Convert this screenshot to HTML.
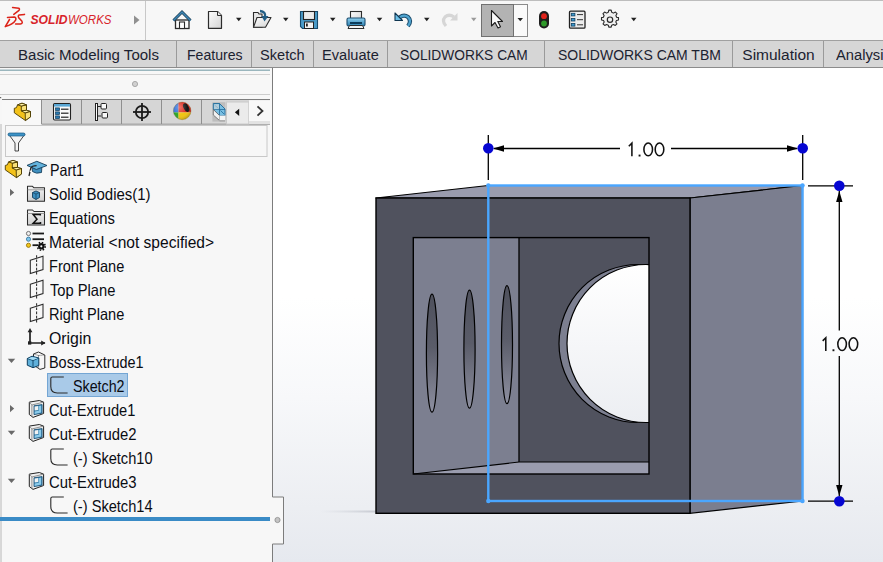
<!DOCTYPE html>
<html><head><meta charset="utf-8">
<style>
*{margin:0;padding:0;box-sizing:border-box}
html,body{width:883px;height:562px;overflow:hidden;background:#f7f7f7;font-family:"Liberation Sans",sans-serif}
.abs{position:absolute}
#top{left:0;top:0;width:883px;height:40px;background:#f7f7f7;border-top:1px solid #bdbdbd}
#tabs{left:0;top:40px;width:883px;height:28px;background:#d6d6d6;border-top:1px solid #a0a0a0;border-bottom:1px solid #8c8c8c}
.tab{position:absolute;top:0;height:26px;border-right:1px solid #9a9a9a;font-size:15.5px;color:#1c2230;line-height:27.7px;white-space:nowrap}
.tl{position:absolute;transform-origin:0 0;font-size:16.5px;color:#0a0c12;white-space:nowrap;line-height:18px}
#view{left:273px;top:68px;width:610px;height:494px;background:linear-gradient(#ffffff 0px,#ffffff 230px,#f7f8fa 330px,#eceef2 440px,#e6e9ef 494px)}
</style></head><body>
<div id="top" class="abs"></div>
<svg class="abs" style="left:0;top:0" width="660" height="40" viewBox="0 0 660 40">
<defs>
 <linearGradient id="pg" x1="0" y1="0" x2="1" y2="1"><stop offset="0" stop-color="#fdfdfd"/><stop offset="1" stop-color="#d4d4d4"/></linearGradient>
 <linearGradient id="bl" x1="0" y1="0" x2="0" y2="1"><stop offset="0" stop-color="#8fd0ef"/><stop offset="1" stop-color="#2a7fb0"/></linearGradient>
</defs>
<!-- logo mark -->
<g fill="none" stroke="#dc2319" stroke-width="1.55" stroke-linecap="round" stroke-linejoin="round">
 <path d="M12.6,7.6 L18.8,8.2 Q20,8.9 19,10.4 L13.8,14.4"/>
 <path d="M7.5,17.4 L14.3,17.1 Q16.6,17.6 15.6,20.2 Q13,24.6 5.3,26.6 L9.5,19.5"/>
 <path d="M24.5,14.4 L19.2,14.9 Q17.6,15.8 18.8,17.9 L21.8,21 Q23.2,23.6 20.4,23.9 L15.6,23.9"/>
</g>
<text x="30.5" y="24.4" font-family="Liberation Sans" font-weight="bold" font-style="italic" font-size="12.6" fill="#d8232a" textLength="37" lengthAdjust="spacingAndGlyphs">SOLID</text>
<text x="68" y="24.4" font-family="Liberation Sans" font-style="italic" font-size="12.6" fill="#d8232a" textLength="43.5" lengthAdjust="spacingAndGlyphs">WORKS</text>
<polygon points="134,15.5 139.5,20 134,24.5" fill="#909090"/>
<line x1="145.5" y1="1" x2="145.5" y2="40" stroke="#c8c8c8" stroke-width="1"/>
<!-- home -->
<rect x="175.5" y="20" width="13.5" height="8.5" fill="#fafafa" stroke="#2a2a2a" stroke-width="1.3"/>
<rect x="179.5" y="22" width="5" height="6.5" fill="#fff" stroke="#2a2a2a" stroke-width="1.1"/>
<path d="M173.5,20.5 L182,12 L190.5,20.5" fill="none" stroke="#1c3f57" stroke-width="3"/>
<path d="M173.5,20.5 L182,12 L190.5,20.5" fill="none" stroke="#3d85b3" stroke-width="1.5"/>
<!-- page -->
<path d="M208.5,11.5 L217.5,11.5 L221.5,15.5 L221.5,28.3 L208.5,28.3 Z" fill="url(#pg)" stroke="#2c2c2c" stroke-width="1.2" stroke-linejoin="round"/>
<path d="M217.5,11.5 L217.5,15.5 L221.5,15.5" fill="#e8e8e8" stroke="#2c2c2c" stroke-width="1"/>
<polygon points="236,17.8 241.5,17.8 238.75,21.2" fill="#222"/>
<!-- folder -->
<path d="M253.5,12.5 L258,12.5 L259,14 L262,14 L262,27.2 L253.5,27.2 Z" fill="#e8e8e8" stroke="#2c2c2c" stroke-width="1.1"/>
<path d="M257,17.5 L271,17.5 L265.5,27.2 L253.5,27.2 Z" fill="url(#pg)" stroke="#2c2c2c" stroke-width="1.1" stroke-linejoin="round"/>
<path d="M260,11 Q266,11.5 265,17" fill="none" stroke="#245f86" stroke-width="2.4"/>
<polygon points="261.5,16 268.5,16 264.5,21.5" fill="#245f86"/>
<polygon points="283,17.8 288.5,17.8 285.75,21.2" fill="#222"/>
<!-- save -->
<path d="M300.5,11.5 L317.5,11.5 L317.5,28.5 L302.5,28.5 L300.5,26.5 Z" fill="#4b9bc8" stroke="#184a6b" stroke-width="1.1"/>
<rect x="303.5" y="11.5" width="11" height="8" fill="#ececec" stroke="#222" stroke-width="1.1"/>
<rect x="304.5" y="22" width="9" height="6.5" fill="#f2f2f2" stroke="#222" stroke-width="1"/>
<rect x="306" y="23.5" width="1.8" height="3" fill="#222"/>
<polygon points="330,17.8 335.5,17.8 332.75,21.2" fill="#222"/>
<!-- print -->
<rect x="350.5" y="11.5" width="11" height="8.5" fill="url(#pg)" stroke="#2c2c2c" stroke-width="1.1"/>
<rect x="347" y="18" width="18" height="8" rx="1.5" fill="url(#bl)" stroke="#1d4e70" stroke-width="1.1"/>
<rect x="350" y="22" width="12" height="2" fill="#0d3d5c"/>
<path d="M349.5,25.5 L362.5,25.5 L364,28.5 L348,28.5 Z" fill="#f4f4f4" stroke="#2c2c2c" stroke-width="1"/>
<polygon points="376.8,17.8 382.3,17.8 379.55,21.2" fill="#222"/>
<!-- undo -->
<path d="M399.5,17.5 Q404,14 408,17 Q412,21 408,26" fill="none" stroke="#1c4c6c" stroke-width="4.2"/>
<path d="M399.5,17.5 Q404,14 408,17 Q412,21 408,26" fill="none" stroke="#4ea3cf" stroke-width="2.2"/>
<polygon points="395,13 395,20.5 402.5,20.5" fill="#6cc0e8" stroke="#0f3550" stroke-width="1.1" stroke-linejoin="round"/>
<polygon points="424,17.8 429.5,17.8 426.75,21.2" fill="#222"/>
<!-- redo -->
<path d="M454,17 Q449,13.5 445,17 Q441.5,21 446,26" fill="none" stroke="#d6d6d6" stroke-width="3.2"/>
<polygon points="457.5,13 457.5,20.5 450,20.5" fill="#d6d6d6"/>
<polygon points="471,17.8 476.5,17.8 473.75,21.2" fill="#9a9a9a"/>
<!-- select button -->
<rect x="481.5" y="4.5" width="46" height="32" fill="#fafafa" stroke="#8a8a8a" stroke-width="1"/>
<rect x="481.5" y="4.5" width="32" height="32" fill="#b3b3b3" stroke="#707070" stroke-width="1"/>
<path d="M491.5,10.5 L491.5,26 L495,22.5 L498,28 L500.5,26.8 L497.8,21.5 L502.5,21.5 Z" fill="#fafafa" stroke="#1c1c1c" stroke-width="1.1" stroke-linejoin="round"/>
<polygon points="517.5,18 523,18 520.25,21.3" fill="#222"/>
<!-- traffic light -->
<rect x="539" y="11" width="10" height="17.5" rx="5" fill="#1e1e1e"/>
<circle cx="544" cy="16.2" r="2.9" fill="#e0241c"/>
<circle cx="544" cy="23.5" r="2.9" fill="#2f9a2a"/>
<!-- list -->
<rect x="569.5" y="11.2" width="15.5" height="17" rx="1" fill="#ececec" stroke="#222" stroke-width="1.3"/>
<rect x="571.3" y="13.3" width="3.6" height="2.6" fill="#3c9ad0" stroke="#0f3e5e" stroke-width="0.8"/>
<rect x="571.3" y="18.4" width="3.6" height="2.6" fill="#3c9ad0" stroke="#0f3e5e" stroke-width="0.8"/>
<rect x="571.3" y="23.5" width="3.6" height="2.6" fill="#3c9ad0" stroke="#0f3e5e" stroke-width="0.8"/>
<g stroke="#333" stroke-width="1"><line x1="577" y1="14.6" x2="583" y2="14.6"/><line x1="577" y1="19.7" x2="583" y2="19.7"/><line x1="577" y1="24.8" x2="583" y2="24.8"/></g>
<!-- gear -->
<path d="M608.8,11.8 L611.2,11.8 L611.7,14 L613.4,14.9 L615.4,13.8 L617,15.5 L615.9,17.4 L616.6,19.2 L618.5,19.6 L618.5,22 L616.5,22.5 L615.8,24.2 L617,26.2 L615.3,27.8 L613.4,26.7 L611.7,27.5 L611.2,29.5 L608.8,29.5 L608.3,27.5 L606.6,26.7 L604.7,27.8 L603,26.2 L604.2,24.2 L603.5,22.5 L601.5,22 L601.5,19.6 L603.4,19.2 L604.1,17.4 L603,15.5 L604.6,13.8 L606.6,14.9 L608.3,14 Z" transform="translate(0,-1.2) scale(1,0.96)" fill="#f0f0f0" stroke="#2a2a2a" stroke-width="1.1" stroke-linejoin="round"/>
<circle cx="610" cy="19.7" r="2.7" fill="none" stroke="#2a2a2a" stroke-width="1.2"/>
<polygon points="631,17.8 636.5,17.8 633.75,21.2" fill="#222"/>
</svg>

<div id="tabs" class="abs">
 <div class="tab" style="left:0px;width:177px;"><span id="tab0" style="transform:scaleX(0.970);position:absolute;left:17.8px;transform-origin:0 0;display:inline-block">Basic Modeling Tools</span></div>
 <div class="tab" style="left:177px;width:75px;"><span id="tab1" style="transform:scaleX(0.909);position:absolute;left:9.5px;transform-origin:0 0;display:inline-block">Features</span></div>
 <div class="tab" style="left:252px;width:62px;"><span id="tab2" style="transform:scaleX(0.941);position:absolute;left:8.2px;transform-origin:0 0;display:inline-block">Sketch</span></div>
 <div class="tab" style="left:314px;width:74px;"><span id="tab3" style="transform:scaleX(0.941);position:absolute;left:8.4px;transform-origin:0 0;display:inline-block">Evaluate</span></div>
 <div class="tab" style="left:388px;width:157px;"><span id="tab4" style="transform:scaleX(0.888);position:absolute;left:12.1px;transform-origin:0 0;display:inline-block">SOLIDWORKS CAM</span></div>
 <div class="tab" style="left:545px;width:188px;"><span id="tab5" style="transform:scaleX(0.902);position:absolute;left:12.5px;transform-origin:0 0;display:inline-block">SOLIDWORKS CAM TBM</span></div>
 <div class="tab" style="left:733px;width:91px;"><span id="tab6" style="transform:scaleX(1.000);position:absolute;left:9.3px;transform-origin:0 0;display:inline-block">Simulation</span></div>
 <div class="tab" style="left:824px;width:80px;border-right:none"><span id="tab7" style="transform:scaleX(0.949);position:absolute;left:11.5px;transform-origin:0 0;display:inline-block">Analysis</span></div>
</div>
<div id="view" class="abs"></div>
<svg class="abs" style="left:0;top:0" width="883" height="562" viewBox="0 0 883 562">
<defs>
 <linearGradient id="slotg" x1="0" y1="0" x2="0" y2="1">
  <stop offset="0" stop-color="#4f515d"/><stop offset="0.45" stop-color="#5a5c69"/><stop offset="1" stop-color="#8d8fa0"/>
 </linearGradient>
 <linearGradient id="holeg" x1="0" y1="0" x2="0" y2="1">
  <stop offset="0" stop-color="#ffffff"/><stop offset="1" stop-color="#eceef2"/>
 </linearGradient>
 <clipPath id="holeclip"><rect x="519" y="237" width="130" height="226"/></clipPath>
</defs>
<defs><linearGradient id="shd" x1="0" y1="0" x2="1" y2="0"><stop offset="0" stop-color="#b8bcc6" stop-opacity="0"/><stop offset="1" stop-color="#a4a8b2" stop-opacity="0.5"/></linearGradient>
<linearGradient id="shd2" x1="0" y1="0" x2="1" y2="0"><stop offset="0" stop-color="#a4a8b2" stop-opacity="0.5"/><stop offset="1" stop-color="#b8bcc6" stop-opacity="0"/></linearGradient></defs>
<rect x="320" y="510.5" width="56" height="2" fill="url(#shd)"/>
<!-- top face -->
<polygon points="376,198 488,185.5 802.5,185.5 690,198" fill="#9a9cae" stroke="#000" stroke-width="1.2" stroke-linejoin="round"/>
<!-- side face -->
<polygon points="690,198 802.5,185.5 802.5,501 690,513.3" fill="#7b7e8f" stroke="#000" stroke-width="1.2"/>
<!-- front face -->
<rect x="376" y="198" width="314" height="315.3" fill="#50525e" stroke="#000" stroke-width="1.4"/>
<!-- opening: left wall -->
<rect x="413.3" y="237.6" width="105.7" height="236.4" fill="#7c7f90"/>
<!-- back wall -->
<rect x="519" y="237.6" width="130" height="224.4" fill="#50525e"/>
<!-- floor -->
<polygon points="413.3,474 519,462 649,462 649,474" fill="#9a9cae"/>
<!-- hole -->
<g clip-path="url(#holeclip)">
 <circle cx="638" cy="343.5" r="79" fill="#7c7f90" stroke="#000" stroke-width="1.2"/>
 <circle cx="646" cy="343.5" r="79" fill="url(#holeg)" stroke="#000" stroke-width="1.2"/>
</g>
<line x1="519" y1="237.6" x2="519" y2="462" stroke="#000" stroke-width="1.3"/>
<line x1="413.3" y1="474" x2="519" y2="462" stroke="#000" stroke-width="1.2"/>
<line x1="519" y1="462" x2="649" y2="462" stroke="#000" stroke-width="1.2"/>
<rect x="413.3" y="237.6" width="235.7" height="236.4" fill="none" stroke="#000" stroke-width="1.4"/>
<!-- slots -->
<ellipse cx="432" cy="353.2" rx="5.6" ry="59" fill="url(#slotg)" stroke="#000" stroke-width="1.2"/>
<ellipse cx="469.5" cy="349.2" rx="5.6" ry="59" fill="url(#slotg)" stroke="#000" stroke-width="1.2"/>
<ellipse cx="507" cy="344.7" rx="5.5" ry="59" fill="url(#slotg)" stroke="#000" stroke-width="1.2"/>
<!-- sketch rect -->
<rect x="488.3" y="185.5" width="314.2" height="315.5" fill="none" stroke="#4aa6ff" stroke-width="2.4"/>
<g fill="#4aa6ff"><circle cx="488.3" cy="185.5" r="2.2"/><circle cx="802.5" cy="185.5" r="2.2"/><circle cx="488.3" cy="501" r="2.2"/><circle cx="802.5" cy="501" r="2.2"/></g>
<!-- dimensions -->
<g stroke="#000" stroke-width="1.3" fill="none">
 <line x1="488.3" y1="135" x2="488.3" y2="180"/>
 <line x1="802.7" y1="135" x2="802.7" y2="180"/>
 <line x1="494" y1="148.5" x2="620" y2="148.5"/>
 <line x1="671" y1="148.5" x2="797" y2="148.5"/>
 <line x1="808" y1="185.8" x2="853" y2="185.8"/>
 <line x1="808" y1="501.2" x2="853" y2="501.2"/>
 <line x1="839.3" y1="191" x2="839.3" y2="330.5"/>
 <line x1="839.3" y1="356" x2="839.3" y2="496"/>
</g>
<g fill="#000">
 <polygon points="493,148.5 504,145.3 504,151.7"/>
 <polygon points="798,148.5 787,145.3 787,151.7"/>
 <polygon points="839.3,191 836.1,202 842.5,202"/>
 <polygon points="839.3,496 836.1,485 842.5,485"/>
</g>
<g fill="#0606d2">
 <circle cx="488.3" cy="148.3" r="5.3"/>
 <circle cx="802.7" cy="148.3" r="5.3"/>
 <circle cx="839.3" cy="185.8" r="5.3"/>
 <circle cx="839.3" cy="501.2" r="5.3"/>
</g>
<g transform="translate(0,0)" fill="none" stroke="#111" stroke-width="1.55">
 <path d="M628.8,146.2 L631.9,143.1 L631.9,156.3"/>
 <ellipse cx="648.2" cy="149.4" rx="4.3" ry="6.4"/>
 <ellipse cx="659.5" cy="149.4" rx="4.3" ry="6.4"/>
</g><rect x="638.6" y="154.6" width="1.9" height="1.9" fill="#111"/>
<g transform="translate(193.9,194.7)" fill="none" stroke="#111" stroke-width="1.55">
 <path d="M628.8,146.2 L631.9,143.1 L631.9,156.3"/>
 <ellipse cx="648.2" cy="149.4" rx="4.3" ry="6.4"/>
 <ellipse cx="659.5" cy="149.4" rx="4.3" ry="6.4"/>
</g><rect x="832.5" y="349.29999999999995" width="1.9" height="1.9" fill="#111"/>
</svg>

<div id="panel" class="abs" style="left:0;top:68px;width:273px;height:494px;background:#f7f7f7;">
</div>
<svg class="abs" style="left:0;top:0" width="290" height="562" viewBox="0 0 290 562">
<defs>
 <linearGradient id="yel" x1="0" y1="0" x2="1" y2="1"><stop offset="0" stop-color="#fff08a"/><stop offset="1" stop-color="#e8b820"/></linearGradient>
 <linearGradient id="fold" x1="0" y1="0" x2="0" y2="1"><stop offset="0" stop-color="#f4f4f4"/><stop offset="1" stop-color="#cfcfcf"/></linearGradient>
 <linearGradient id="cube" x1="0" y1="0" x2="1" y2="1"><stop offset="0" stop-color="#9fd6f2"/><stop offset="1" stop-color="#1f6e9e"/></linearGradient>
</defs>
<!-- panel right border -->
<path d="M272.5,68 L272.5,497 L283.5,497 L283.5,544 L272.5,544 L272.5,562" fill="#f7f7f7" stroke="#7c7c7c" stroke-width="1"/>
<rect x="0" y="498" width="272" height="45" fill="#f7f7f7"/>
<circle cx="277.5" cy="520" r="2.6" fill="#c4c4c4" stroke="#8c8c8c" stroke-width="0.8"/>
<!-- top lines -->
<line x1="0" y1="70.3" x2="270" y2="70.3" stroke="#9ab6bd" stroke-width="1.4"/>
<line x1="0" y1="74.5" x2="270" y2="74.5" stroke="#d2d2d2" stroke-width="1"/>
<circle cx="135" cy="84" r="2.6" fill="#d0d0d0" stroke="#9a9a9a" stroke-width="0.8"/>
<line x1="0" y1="94.5" x2="270" y2="94.5" stroke="#cdcdcd" stroke-width="1"/>
<rect x="0" y="97" width="1.2" height="1.2" fill="#666"/>
<!-- tab row -->
<rect x="2" y="99.5" width="268" height="24.5" fill="#d6d6d6"/>
<rect x="2" y="99.5" width="39.5" height="25.5" fill="#f8f8f8"/>
<line x1="2" y1="99.5" x2="270" y2="99.5" stroke="#7d7d7d" stroke-width="1.1"/>
<line x1="41.5" y1="124.2" x2="270" y2="124.2" stroke="#8f8f8f" stroke-width="1"/>
<g stroke="#8f8f8f" stroke-width="1">
 <line x1="41.5" y1="100" x2="41.5" y2="124"/><line x1="81.5" y1="100" x2="81.5" y2="124"/><line x1="121.5" y1="100" x2="121.5" y2="124"/><line x1="161.5" y1="100" x2="161.5" y2="124"/><line x1="201.5" y1="100" x2="201.5" y2="124"/>
</g>
<line x1="1" y1="124" x2="1" y2="562" stroke="#b8b8b8" stroke-width="1"/>
<!-- tab icon 1 part -->
<g transform="translate(0,0)" stroke="#4a3a00" stroke-width="0.9" stroke-linejoin="round">
 <path d="M14.3,108.3 L16.4,107.7 L17.5,104.9 L22,103.2 L26.5,104.9 L26.5,110.3 L30.5,111.5 L30.5,116.9 L25.4,120.5 L14.3,112.8 Z" fill="#f3c21a"/>
 <path d="M21.3,106 L26.5,104.9 L26.5,110.3 L21.3,110.9 Z" fill="#f9e27a"/>
 <path d="M17.5,104.9 L22,103.2 L26.5,104.9 L21.3,106 Z" fill="#fff2a6"/>
 <path d="M21.3,110.9 L26.5,110.3 L30.5,111.5 L25.2,113 Z" fill="#fff2a6"/>
 <path d="M25.2,113 L30.5,111.5 L30.5,116.9 L25.4,120.5 Z" fill="#f9e27a"/>
</g>
<!-- tab icon 2 -->
<rect x="53.5" y="103.5" width="17" height="16.5" rx="1.2" fill="#fafafa" stroke="#222" stroke-width="1.1"/>
<rect x="54" y="104" width="16" height="2.6" fill="#5aa7d4"/>
<g fill="#2a7ab0" stroke="#0e3a5a" stroke-width="0.7"><rect x="55.6" y="107.9" width="4" height="2.6"/><rect x="55.6" y="111.9" width="4" height="2.6"/><rect x="55.6" y="115.9" width="4" height="2.6"/></g>
<g stroke="#222" stroke-width="1.2"><line x1="61" y1="109.2" x2="68.5" y2="109.2"/><line x1="61" y1="113.2" x2="68.5" y2="113.2"/><line x1="61" y1="117.2" x2="68.5" y2="117.2"/></g>
<!-- tab icon 3 -->
<g fill="#fafafa" stroke="#222" stroke-width="1">
 <rect x="95.5" y="103.5" width="2" height="17"/>
 <path d="M97.5,106.5 L101,106.5 M97.5,116 L101,116" fill="none"/>
 <rect x="101" y="103.5" width="5.5" height="5.5" rx="1"/>
 <rect x="102" y="112.5" width="5.5" height="5.5" rx="1"/>
</g>
<!-- tab icon 4 crosshair -->
<circle cx="142" cy="112" r="6.2" fill="none" stroke="#1c1c1c" stroke-width="1.8"/>
<line x1="133" y1="112" x2="151" y2="112" stroke="#1c1c1c" stroke-width="1.8"/>
<line x1="142" y1="103" x2="142" y2="121" stroke="#1c1c1c" stroke-width="1.8"/>
<!-- tab icon 5 ball -->
<defs><radialGradient id="ballsh" cx="0.35" cy="0.3" r="0.75"><stop offset="0" stop-color="#fff" stop-opacity="0.35"/><stop offset="0.6" stop-color="#fff" stop-opacity="0"/><stop offset="1" stop-color="#000" stop-opacity="0.25"/></radialGradient>
<clipPath id="ballc"><circle cx="182.2" cy="110.9" r="8.8"/></clipPath></defs>
<g clip-path="url(#ballc)">
 <rect x="172" y="100" width="6.5" height="12.4" fill="#2f6fd8"/>
 <rect x="178.5" y="100" width="14" height="12.4" fill="#dd2a1e"/>
 <rect x="172" y="112.4" width="6.5" height="10" fill="#2da52a"/>
 <rect x="178.5" y="112.4" width="14" height="10" fill="#f0c40e"/>
 <ellipse cx="186.2" cy="107.6" rx="2.6" ry="4.6" transform="rotate(-28 186.2 107.6)" fill="#141414"/>
 <circle cx="182.2" cy="110.9" r="8.8" fill="url(#ballsh)"/>
</g>
<circle cx="182.2" cy="110.9" r="8.8" fill="none" stroke="#6a5a20" stroke-width="0.5" stroke-opacity="0.6"/>
<!-- tab icon 6 -->
<rect x="212.4" y="102.2" width="13" height="19.4" fill="#bdbdbd"/>
<path d="M213.3,103.5 L219.5,103.5 L225,109 L225,115.5 L219.5,115.5 L213.3,109.5 Z" fill="#79bfe2" stroke="#1f6a9a" stroke-width="0.9"/>
<path d="M219.5,103.5 L219.5,115.5 M213.3,109.5 L225,109.5 M214.5,105 L218.5,108.5 M220.5,110.5 L224,114" fill="none" stroke="#1f6a9a" stroke-width="0.8"/>
<rect x="214" y="104.2" width="5" height="5" fill="#d8d8d8" opacity="0.6"/>
<path d="M213.3,109.5 L219.5,115.5 L219.5,120.5 L213.3,115 Z" fill="#f2f2f2" stroke="#666" stroke-width="0.8"/>
<rect x="219.5" y="115.5" width="5.5" height="5.5" fill="#f4f4f4"/>
<line x1="219.5" y1="120.8" x2="225" y2="120.8" stroke="#888" stroke-width="0.9"/>
<!-- arrows -->
<rect x="226.5" y="102" width="22.3" height="22" fill="#ebebeb" stroke="#cacaca" stroke-width="1"/>
<rect x="249" y="100.2" width="21" height="21" fill="#f8f8f8"/>
<rect x="249" y="121" width="21" height="3" fill="#e2e2e2"/>
<polygon points="239.2,108.8 239.2,115.9 234.9,112.35" fill="#111"/>
<polyline points="257.5,106.3 262.5,111 257.5,115.7" fill="none" stroke="#333" stroke-width="1.8"/>
<!-- filter box -->
<rect x="5.5" y="125.5" width="261.5" height="31" fill="#f7f7f7" stroke="#c8c8c8" stroke-width="1"/>
<path d="M8.5,134 L25,134 L18.5,143 L18.5,151 L15,151 L15,143 Z" fill="#f4f4f4" stroke="#333" stroke-width="0.9" stroke-linejoin="round"/>
<rect x="8" y="133" width="17" height="3" rx="1.5" fill="#3d93c6" stroke="#1a5a85" stroke-width="0.7"/>
</svg>

<svg class="abs" style="left:0;top:0" width="290" height="562" viewBox="0 0 290 562">
<rect x="47.5" y="373.5" width="80" height="23" fill="#a9cae8" stroke="#74a6d4" stroke-width="1"/>
<g transform="translate(-9,57.1)" stroke="#4a3a00" stroke-width="0.9" stroke-linejoin="round">
 <path d="M14.3,108.3 L16.4,107.7 L17.5,104.9 L22,103.2 L26.5,104.9 L26.5,110.3 L30.5,111.5 L30.5,116.9 L25.4,120.5 L14.3,112.8 Z" fill="#f3c21a"/>
 <path d="M21.3,106 L26.5,104.9 L26.5,110.3 L21.3,110.9 Z" fill="#f9e27a"/>
 <path d="M17.5,104.9 L22,103.2 L26.5,104.9 L21.3,106 Z" fill="#fff2a6"/>
 <path d="M21.3,110.9 L26.5,110.3 L30.5,111.5 L25.2,113 Z" fill="#fff2a6"/>
 <path d="M25.2,113 L30.5,111.5 L30.5,116.9 L25.4,120.5 Z" fill="#f9e27a"/>
</g>

<path d="M32,167.5 L32.5,171.5 Q36,174.3 41.5,172.5 L41.8,167.5 Z" fill="#3f8fbf" stroke="#17415e" stroke-width="0.9"/>
<path d="M27,165.4 L36.8,161.3 L47,165.5 L36.4,169.5 Z" fill="#62b2dc" stroke="#17415e" stroke-width="0.95" stroke-linejoin="round"/>
<path d="M36.6,165.6 Q32,165.6 30.8,168 L29,176" fill="none" stroke="#262626" stroke-width="1.3"/>
<circle cx="30.4" cy="171.3" r="0.8" fill="#fff"/>
<path d="M27.5,186.3 L32.5,186.3 L34,187.8 L44.5,187.8 L44.5,201.3 L27.5,201.3 Z" fill="url(#fold)" stroke="#2c2c2c" stroke-width="1.05" stroke-linejoin="round"/>
<line x1="27.5" y1="189.8" x2="44.5" y2="189.8" stroke="#8a8a8a" stroke-width="0.8"/>
<path d="M27.5,210 L32.5,210 L34,211.5 L44.5,211.5 L44.5,225 L27.5,225 Z" fill="url(#fold)" stroke="#2c2c2c" stroke-width="1.05" stroke-linejoin="round"/>
<line x1="27.5" y1="213.5" x2="44.5" y2="213.5" stroke="#8a8a8a" stroke-width="0.8"/>
<path d="M32.5,192.5 L36,191 L39.5,192.5 L39.5,197.5 L36,199.5 L32.5,197.5 Z" fill="#3d8fc0" stroke="#153f5d" stroke-width="0.9"/><path d="M32.5,192.5 L36,194 L39.5,192.5 M36,194 L36,199.5" fill="none" stroke="#153f5d" stroke-width="0.7"/>
<path d="M40.3,215.6 L40.3,214.6 L33.2,214.6 L37,219.2 L33.2,223.2 L40.5,223.2 L40.5,222" fill="none" stroke="#111" stroke-width="1.5" stroke-linejoin="miter"/>
<circle cx="28.5" cy="233.5" r="2.1" fill="#eee" stroke="#555" stroke-width="0.8"/>
<circle cx="28.5" cy="239.2" r="2.1" fill="#7cc4ea" stroke="#2d6f99" stroke-width="0.8"/>
<circle cx="28.5" cy="245.3" r="2.1" fill="#f2c518" stroke="#8a6a00" stroke-width="0.8"/>
<g stroke="#1a1a1a" stroke-width="1.8"><line x1="32.5" y1="233.5" x2="44" y2="233.5"/><line x1="32.5" y1="239.2" x2="44" y2="239.2"/><line x1="32.5" y1="245.2" x2="37.5" y2="245.2"/></g>
<circle cx="41.3" cy="246.3" r="3.2" fill="#111"/><circle cx="41.3" cy="246.3" r="3.9" fill="none" stroke="#111" stroke-width="1.6" stroke-dasharray="1.5,1.56"/><circle cx="41.3" cy="246.3" r="1.1" fill="#f5f5f5"/>
<path d="M30.3,260.2 L43,256.2 L43,269.59999999999997 L30.3,273.59999999999997 Z" fill="none" stroke="#2a2a2a" stroke-width="1.05"/>
<line x1="36.6" y1="255.2" x2="36.6" y2="274.7" stroke="#2a2a2a" stroke-width="1.05" stroke-dasharray="2.6,1.6"/>
<path d="M30.3,284.2 L43,280.2 L43,293.59999999999997 L30.3,297.59999999999997 Z" fill="none" stroke="#2a2a2a" stroke-width="1.05"/>
<line x1="36.6" y1="279.2" x2="36.6" y2="298.7" stroke="#2a2a2a" stroke-width="1.05" stroke-dasharray="2.6,1.6"/>
<path d="M30.3,308.2 L43,304.2 L43,317.59999999999997 L30.3,321.59999999999997 Z" fill="none" stroke="#2a2a2a" stroke-width="1.05"/>
<line x1="36.6" y1="303.2" x2="36.6" y2="322.7" stroke="#2a2a2a" stroke-width="1.05" stroke-dasharray="2.6,1.6"/>
<path d="M30,344 L30,330.5 M45,343 L31,343" stroke="#222" stroke-width="1.7" fill="none"/>
<polygon points="30,328 27.6,332.3 32.4,332.3" fill="#222"/><polygon points="45.5,343 41.2,340.6 41.2,345.4" fill="#222"/>
<rect x="28" y="341.3" width="3.3" height="3.3" fill="#222"/>
<path d="M33.5,354 L38.5,352 L44.8,355 L44.8,368 L40,369.4 L33.5,365 Z" fill="#f6f6f6" stroke="#222" stroke-width="0.95" stroke-linejoin="round"/>
<path d="M38.5,355.5 L44.8,355 M38.5,355.5 L38.5,369 M33.5,354 L38.5,355.5" fill="none" stroke="#555" stroke-width="0.8" stroke-dasharray="1.2,0.8"/>
<path d="M27.3,358.5 L32,356.2 L38.8,358 L38.8,365.5 L33,367.7 L27.3,365.2 Z" fill="#5fb0da" stroke="#0f3f60" stroke-width="1" stroke-linejoin="round"/>
<path d="M27.3,358.5 L33,360.5 L38.8,358 M33,360.5 L33,367.7" fill="none" stroke="#0f3f60" stroke-width="0.9"/>
<path d="M28,358.6 L32,356.9 L38,358.3 L33,360 Z" fill="#a6dcf5"/>
<polygon points="10,188.8 14.2,192.4 10,196.0" fill="#6a6a6a"/>
<polygon points="7.8,358.8 15.2,358.8 11.5,363.1" fill="#6a6a6a"/>
<polygon points="10,405 14.2,408.6 10,412.2" fill="#6a6a6a"/>
<polygon points="7.8,430.8 15.2,430.8 11.5,435.1" fill="#6a6a6a"/>
<polygon points="7.8,478.8 15.2,478.8 11.5,483.1" fill="#6a6a6a"/>
<g transform="translate(0,0)">
<path d="M29.3,402.1 L39.3,400.5 L43.6,402.1 L43.6,413.5 L33,417.4 L29.3,414.5 Z" fill="#f0f0f0" stroke="#222" stroke-width="1"/>
<path d="M31.9,405 L43.6,402.1 M31.9,405 L31.9,417" fill="none" stroke="#777" stroke-width="0.8"/>
<path d="M29.3,402.1 L31.9,405" fill="none" stroke="#777" stroke-width="0.7"/>
<path d="M34,405.8 L42.1,404.6 L42.1,413.2 L34,414.6 Z" fill="#2f7aa8" stroke="#164a6e" stroke-width="0.8"/>
<path d="M34.6,406.6 L38.3,406 L38.3,410 L34.6,410.6 Z" fill="#f2f2f2"/>
<path d="M34.6,414 L34.6,411.6 L38.8,410.8 L38.8,405.9 L41.2,405.5 L41.2,412.4 Z" fill="#8ccbea"/>
</g>
<g transform="translate(0,24)">
<path d="M29.3,402.1 L39.3,400.5 L43.6,402.1 L43.6,413.5 L33,417.4 L29.3,414.5 Z" fill="#f0f0f0" stroke="#222" stroke-width="1"/>
<path d="M31.9,405 L43.6,402.1 M31.9,405 L31.9,417" fill="none" stroke="#777" stroke-width="0.8"/>
<path d="M29.3,402.1 L31.9,405" fill="none" stroke="#777" stroke-width="0.7"/>
<path d="M34,405.8 L42.1,404.6 L42.1,413.2 L34,414.6 Z" fill="#2f7aa8" stroke="#164a6e" stroke-width="0.8"/>
<path d="M34.6,406.6 L38.3,406 L38.3,410 L34.6,410.6 Z" fill="#f2f2f2"/>
<path d="M34.6,414 L34.6,411.6 L38.8,410.8 L38.8,405.9 L41.2,405.5 L41.2,412.4 Z" fill="#8ccbea"/>
</g>
<g transform="translate(0,72)">
<path d="M29.3,402.1 L39.3,400.5 L43.6,402.1 L43.6,413.5 L33,417.4 L29.3,414.5 Z" fill="#f0f0f0" stroke="#222" stroke-width="1"/>
<path d="M31.9,405 L43.6,402.1 M31.9,405 L31.9,417" fill="none" stroke="#777" stroke-width="0.8"/>
<path d="M29.3,402.1 L31.9,405" fill="none" stroke="#777" stroke-width="0.7"/>
<path d="M34,405.8 L42.1,404.6 L42.1,413.2 L34,414.6 Z" fill="#2f7aa8" stroke="#164a6e" stroke-width="0.8"/>
<path d="M34.6,406.6 L38.3,406 L38.3,410 L34.6,410.6 Z" fill="#f2f2f2"/>
<path d="M34.6,414 L34.6,411.6 L38.8,410.8 L38.8,405.9 L41.2,405.5 L41.2,412.4 Z" fill="#8ccbea"/>
</g>
<path d="M63.8,377.0 L52.3,377.0 Q50.8,377.0 50.8,378.5 L50.8,386.5 Q50.8,393.0 57.3,393.0 L67.6,393.0" fill="none" stroke="#2a2a2a" stroke-width="1.1"/>
<path d="M63.8,449.0 L52.3,449.0 Q50.8,449.0 50.8,450.5 L50.8,458.5 Q50.8,465.0 57.3,465.0 L67.6,465.0" fill="none" stroke="#2a2a2a" stroke-width="1.1"/>
<path d="M63.8,497.0 L52.3,497.0 Q50.8,497.0 50.8,498.5 L50.8,506.5 Q50.8,513.0 57.3,513.0 L67.6,513.0" fill="none" stroke="#2a2a2a" stroke-width="1.1"/>
<rect x="0" y="517" width="270" height="4" fill="#3a8bc6"/>
</svg>
<div class="tl" style="left:50.4px;top:161px;transform:scaleX(0.863)">Part1</div>
<div class="tl" style="left:49.4px;top:185px;transform:scaleX(0.908)">Solid Bodies(1)</div>
<div class="tl" style="left:49.4px;top:209px;transform:scaleX(0.897)">Equations</div>
<div class="tl" style="left:49.4px;top:233px;transform:scaleX(0.942)">Material &lt;not specified&gt;</div>
<div class="tl" style="left:49.4px;top:257px;transform:scaleX(0.882)">Front Plane</div>
<div class="tl" style="left:50.3px;top:281px;transform:scaleX(0.890)">Top Plane</div>
<div class="tl" style="left:49.4px;top:305px;transform:scaleX(0.882)">Right Plane</div>
<div class="tl" style="left:49.3px;top:329px;transform:scaleX(0.960)">Origin</div>
<div class="tl" style="left:49.4px;top:353px;transform:scaleX(0.874)">Boss-Extrude1</div>
<div class="tl" style="left:72.5px;top:377px;transform:scaleX(0.864)">Sketch2</div>
<div class="tl" style="left:49.4px;top:401px;transform:scaleX(0.888)">Cut-Extrude1</div>
<div class="tl" style="left:49.4px;top:425px;transform:scaleX(0.900)">Cut-Extrude2</div>
<div class="tl" style="left:73.1px;top:449px;transform:scaleX(0.885)">(-) Sketch10</div>
<div class="tl" style="left:49.4px;top:473px;transform:scaleX(0.900)">Cut-Extrude3</div>
<div class="tl" style="left:73.1px;top:497px;transform:scaleX(0.885)">(-) Sketch14</div>
</body></html>
